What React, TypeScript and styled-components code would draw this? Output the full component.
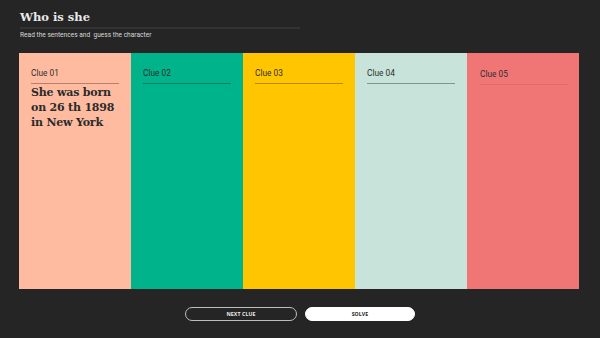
import React from "react";
import styled, { createGlobalStyle } from "styled-components";

const GlobalStyle = createGlobalStyle`
  html, body {
    margin: 0;
    padding: 0;
    background: #252525;
  }
  body {
    font-family: Roboto, "Liberation Sans", sans-serif;
    width: 600px;
    height: 338px;
    overflow: hidden;
  }
`;

const Page = styled.div`
  display: flex;
  flex-direction: column;
  padding: 9px 21px 0 19px;
  height: 338px;
  box-sizing: border-box;
`;

const Header = styled.header`
  width: 280px;
  margin-left: 1px;
`;

const Title = styled.h1`
  margin: 0;
  font-family: "DejaVu Serif", "Liberation Serif", serif;
  font-weight: bold;
  font-size: 11.5px;
  line-height: 16px;
  color: #e8e8e8;
  padding-bottom: 2px;
  border-bottom: 2px solid #333;
`;

const Subtitle = styled.p`
  margin: 2px 0 0;
  font-size: 6.6px;
  line-height: 8px;
  color: #d8d8d8;
  white-space: pre;
`;

const Board = styled.div`
  display: grid;
  grid-template-columns: repeat(5, 112px);
  height: 236px;
  margin-top: 14px;
`;

const Clue = styled.section<{ $bg: string; $shift?: number }>`
  background: ${(p) => p.$bg};
  padding: ${(p) => 15 + (p.$shift ?? 0)}px ${(p) => 12 - (p.$shift ?? 0)}px 0
    ${(p) => 12 + (p.$shift ?? 0)}px;
`;

const ClueLabel = styled.div<{ $line: string }>`
  font-size: 8.3px;
  line-height: 10px;
  color: #2e2e2e;
  padding-bottom: 5px;
  border-bottom: 1px solid ${(p) => p.$line};
`;

const ClueText = styled.p`
  margin: 1px 0 0;
  font-family: "DejaVu Serif", "Liberation Serif", serif;
  font-weight: bold;
  font-size: 11px;
  letter-spacing: -0.2px;
  line-height: 15px;
  color: #2b2b2b;
`;

const Actions = styled.div`
  display: flex;
  justify-content: center;
  gap: 8px;
  margin-top: 18px;
  padding-left: 2px;
`;

const Button = styled.button<{ $solid?: boolean }>`
  width: ${(p) => (p.$solid ? 110 : 112)}px;
  height: 14px;
  padding: 0;
  border-radius: 7px;
  border: 1px solid ${(p) => (p.$solid ? "#fff" : "#bdbdbd")};
  background: ${(p) => (p.$solid ? "#fff" : "transparent")};
  color: ${(p) => (p.$solid ? "#222" : "#eee")};
  font-family: "Open Sans", "Liberation Sans", sans-serif;
  font-weight: 700;
  font-size: 5.2px;
  letter-spacing: 0.1px;
  line-height: 12px;
`;

const clues = [
  { bg: "#ffbba0", line: "rgba(0,0,0,0.3)", text: "She was born on 26 th 1898 in New York" },
  { bg: "#00b38b", line: "rgba(0,0,0,0.3)" },
  { bg: "#ffc600", line: "rgba(0,0,0,0.3)" },
  { bg: "#c8e3d9", line: "rgba(0,0,0,0.35)" },
  { bg: "#f07676", line: "rgba(0,0,0,0.08)", shift: 1 },
];

export default function App() {
  return (
    <>
      <GlobalStyle />
      <Page>
        <Header>
          <Title>Who is she</Title>
          <Subtitle>Read the sentences and  guess the character</Subtitle>
        </Header>
        <Board>
          {clues.map((c, i) => (
            <Clue key={i} $bg={c.bg} $shift={c.shift}>
              <ClueLabel $line={c.line}>Clue 0{i + 1}</ClueLabel>
              {c.text && <ClueText>{c.text}</ClueText>}
            </Clue>
          ))}
        </Board>
        <Actions>
          <Button>NEXT CLUE</Button>
          <Button $solid>SOLVE</Button>
        </Actions>
      </Page>
    </>
  );
}
